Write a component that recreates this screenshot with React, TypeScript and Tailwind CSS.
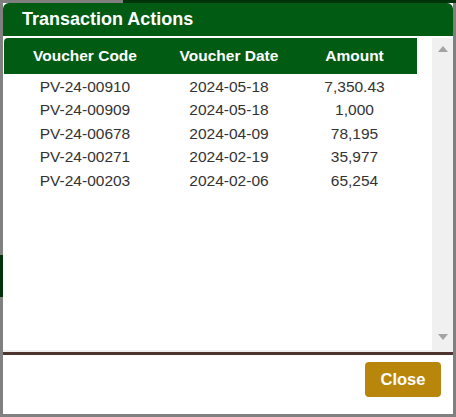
import React from "react";

const rows = [
  { code: "PV-24-00910", date: "2024-05-18", amount: "7,350.43" },
  { code: "PV-24-00909", date: "2024-05-18", amount: "1,000" },
  { code: "PV-24-00678", date: "2024-04-09", amount: "78,195" },
  { code: "PV-24-00271", date: "2024-02-19", amount: "35,977" },
  { code: "PV-24-00203", date: "2024-02-06", amount: "65,254" },
];

function ScrollArrow({ down }: { down?: boolean }) {
  return (
    <svg width="10" height="6" viewBox="0 0 10 6" className="block">
      <polygon points={down ? "0,0 10,0 5,6" : "0,6 10,6 5,0"} fill="#a3a3a3" />
    </svg>
  );
}

export default function App() {
  return (
    <div
      className="relative h-[417px] w-[456px] overflow-hidden bg-[#808080] p-[3px]"
      style={{ fontFamily: '"Liberation Sans", Arial, sans-serif' }}
    >
      {/* obscured page behind the overlay */}
      <div className="absolute left-[123px] right-0 top-0 h-[3px] bg-[#00330a]" />
      <div className="absolute left-0 top-[255px] h-[42px] w-[3px] bg-[#00330a]" />

      <div className="relative flex h-[411px] w-[450px] flex-col bg-white">
        <div className="flex h-[33px] items-center rounded-t-[6px] bg-[#015b12] px-[19px] text-[18px] font-bold text-white">
          Transaction Actions
        </div>

        <div className="mt-[2px] flex h-[312px]">
          <div className="flex-1 pl-px">
            <div className="flex h-[36px] w-[413px] items-center rounded-tl-[4px] bg-[#015b12] text-[15.5px] font-bold text-white">
              <div className="w-[162px] text-center">Voucher Code</div>
              <div className="w-[126px] text-center">Voucher Date</div>
              <div className="w-[125px] text-center">Amount</div>
            </div>
            <div className="w-[413px] pt-[1px] text-[15.5px] text-[#333]">
              {rows.map((r) => (
                <div key={r.code} className="flex h-[23.4px] items-center">
                  <div className="w-[162px] text-center">{r.code}</div>
                  <div className="w-[126px] text-center">{r.date}</div>
                  <div className="w-[125px] text-center">{r.amount}</div>
                </div>
              ))}
            </div>
          </div>
          <div className="flex w-[21px] flex-col items-center justify-between bg-[#f0f0f0] pb-[10px] pt-[8px]">
            <ScrollArrow />
            <ScrollArrow down />
          </div>
        </div>

        <div className="h-[2px] bg-[#f0f0f0]" />
        <div className="h-[3px] bg-[#4e342e]" />

        <div className="flex flex-1 items-start justify-end pr-[12px] pt-[7px]">
          <button
            type="button"
            className="h-[35px] w-[76px] rounded-[4px] bg-[#b8860b] text-[16.5px] font-bold text-white"
          >
            Close
          </button>
        </div>
      </div>
    </div>
  );
}
